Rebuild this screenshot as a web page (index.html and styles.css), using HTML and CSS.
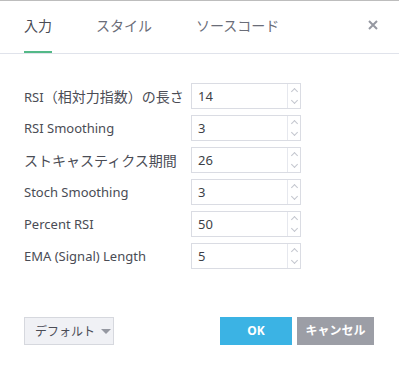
FILE: index.html
```html
<!DOCTYPE html>
<html lang="ja">
<head>
    <meta charset="UTF-8">
    <title>RSI 設定</title>
    <link rel="stylesheet" href="styles.css">
</head>
<body>
    <div class="dialog">
        <div class="tabs">
            <div class="tab active">入力</div>
            <div class="tab">スタイル</div>
            <div class="tab">ソースコード</div>
            <div class="close">
                <svg width="10" height="10" viewBox="0 0 10 10"><path d="M1 1L9 9M9 1L1 9" stroke="#9598a1" stroke-width="2"/></svg>
            </div>
        </div>
        <div class="fields">
            <div class="row">
                <div class="label">RSI<span class="ja">（相対力指数）の長さ</span></div>
                <div class="spin"><span class="value">14</span><span class="arrows"><i class="up"></i><i class="down"></i></span></div>
            </div>
            <div class="row">
                <div class="label">RSI Smoothing</div>
                <div class="spin"><span class="value">3</span><span class="arrows"><i class="up"></i><i class="down"></i></span></div>
            </div>
            <div class="row">
                <div class="label"><span class="ja">ストキャスティクス期間</span></div>
                <div class="spin"><span class="value">26</span><span class="arrows"><i class="up"></i><i class="down"></i></span></div>
            </div>
            <div class="row">
                <div class="label">Stoch Smoothing</div>
                <div class="spin"><span class="value">3</span><span class="arrows"><i class="up"></i><i class="down"></i></span></div>
            </div>
            <div class="row">
                <div class="label">Percent RSI</div>
                <div class="spin"><span class="value">50</span><span class="arrows"><i class="up"></i><i class="down"></i></span></div>
            </div>
            <div class="row">
                <div class="label">EMA (Signal) Length</div>
                <div class="spin"><span class="value">5</span><span class="arrows"><i class="up"></i><i class="down"></i></span></div>
            </div>
        </div>
        <div class="footer">
            <div class="defaults">デフォルト<span class="caret"></span></div>
            <div class="buttons">
                <div class="btn ok">OK</div>
                <div class="btn cancel">キャンセル</div>
            </div>
        </div>
    </div>
</body>
</html>
```

FILE: styles.css
```css
body {
    margin: 0;
    background: #fff;
    font-family: "Noto Sans", "Noto Sans CJK JP", sans-serif;
    color: #4a4c55;
}

.dialog {
    width: 399px;
    height: 370px;
    border-top: 1px solid #bdbdbd;
    box-sizing: border-box;
}

.tabs {
    display: flex;
    height: 53px;
    padding-left: 24px;
    box-shadow: inset 0 -1px #e0e3eb;
}
.tab {
    font-size: 14px;
    line-height: 50px;
    height: 50px;
    margin-right: 44px;
    color: #6a6d78;
    border-bottom: 2px solid transparent;
}
.tab.active {
    color: #4a4c55;
    border-bottom-color: #53b987;
}
.close {
    margin-left: auto;
    padding: 19px 21px 0 0;
}
.close svg {
    display: block;
}

.fields {
    padding: 29px 0 0 24px;
    display: flex;
    flex-direction: column;
    gap: 6px;
}
.row {
    display: flex;
    align-items: center;
    height: 26px;
}
.label {
    width: 167px;
    font-size: 13px;
    white-space: nowrap;
}
.label .ja {
    font-size: 14px;
}
.spin {
    display: flex;
    width: 110px;
    height: 26px;
    border: 1px solid #dadce3;
    box-sizing: border-box;
}
.value {
    flex: 1;
    font-size: 13px;
    line-height: 24px;
    padding-left: 6px;
    color: #3d3f47;
}
.arrows {
    width: 12px;
    border-left: 1px solid #e6e8ee;
    display: flex;
    flex-direction: column;
}
.arrows i {
    flex: 1;
    position: relative;
}
.arrows i::after {
    content: "";
    position: absolute;
    left: 4px;
    width: 4px;
    height: 4px;
    border: solid #c3c6ce;
    border-width: 1px 0 0 1px;
}
.arrows .up::after {
    top: 5px;
    transform: rotate(45deg);
}
.arrows .down::after {
    top: 2px;
    transform: rotate(225deg);
}

.footer {
    display: flex;
    justify-content: space-between;
    padding: 48px 25px 0 24px;
}
.defaults {
    display: flex;
    align-items: center;
    white-space: nowrap;
    width: 90px;
    height: 28px;
    box-sizing: border-box;
    border: 1px solid #d6d8de;
    background: #f0f1f5;
    font-size: 12px;
    padding-left: 10px;
    color: #4a4c55;
}
.caret {
    margin-left: 6px;
    border: 5px solid transparent;
    border-top: 5px solid #9598a1;
    border-bottom: 0;
}
.buttons {
    display: flex;
    gap: 5px;
}
.btn {
    height: 28px;
    line-height: 28px;
    text-align: center;
    color: #fff;
    font-weight: bold;
    font-size: 12px;
}
.ok {
    width: 72px;
    background: #3bb3e4;
}
.cancel {
    width: 77px;
    background: #9c9ea6;
}
```
